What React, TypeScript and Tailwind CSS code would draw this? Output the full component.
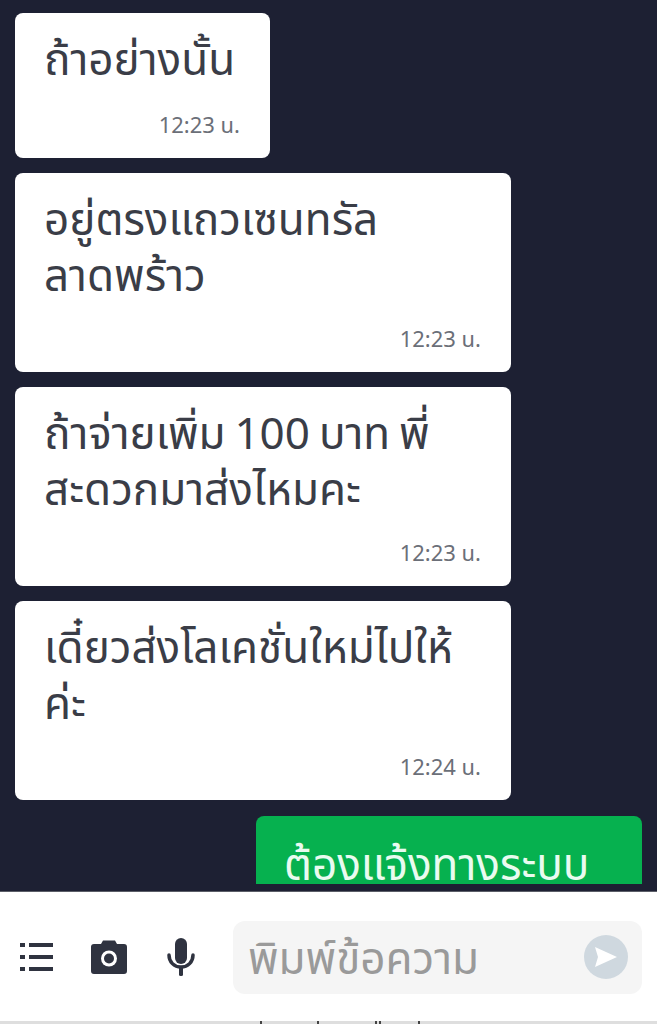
const font = { fontFamily: '"Noto Sans", "Noto Sans Thai", "Noto Sans CJK SC", sans-serif' };

const messages = [
    { lines: ['ถ้าอย่างนั้น'], time: '12:23 น.', small: true },
    { lines: ['อยู่ตรงแถวเซนทรัล', 'ลาดพร้าว'], time: '12:23 น.' },
    { lines: ['ถ้าจ่ายเพิ่ม 100 บาท พี่', 'สะดวกมาส่งไหมคะ'], time: '12:23 น.' },
    { lines: ['เดี๋ยวส่งโลเคชั่นใหม่ไปให้', 'ค่ะ'], time: '12:24 น.' },
];

function Bubble({ lines, time, small }: { lines: string[]; time: string; small?: boolean }) {
    return (
        <div className={`bg-white rounded-[8px] flex flex-col justify-between pl-[29px] pr-[30px] pt-[17px] pb-[19px] ${small ? 'w-[255px] h-[145px]' : 'w-[496px] h-[199px]'}`}>
            <div className="text-[44px] leading-[56px] text-[#3a3d47] whitespace-nowrap [word-spacing:-2.5px]">
                {lines.map((l) => (
                    <div key={l}>{l}</div>
                ))}
            </div>
            <div className="text-right text-[22px] leading-[30px] text-[#6b6f78]">{time}</div>
        </div>
    );
}

export default function App() {
    return (
        <div className="w-[657px] h-[1024px] overflow-hidden flex flex-col bg-white" style={font}>
            {/* Messages */}
            <div className="h-[892px] shrink-0 bg-[#1d2033] overflow-hidden border-b border-[#5b5e68]">
                <div className="flex flex-col gap-[15px] pt-[13px] pl-[15px]">
                    {messages.map((m) => (
                        <Bubble key={m.time + m.lines[0]} {...m} />
                    ))}
                    <div className="ml-[241px] mt-[1px] w-[386px] h-[68px] bg-[#06b14f] rounded-t-[8px] pl-[28px] pt-[19px] overflow-hidden">
                        <div className="text-[44px] leading-[57px] text-[#e9fbf0] whitespace-nowrap">ต้องแจ้งทางระบบ</div>
                    </div>
                </div>
            </div>

            {/* Input bar */}
            <div className="h-[129px] shrink-0 flex items-center pl-[20px] pr-[15px] pt-[1px]">
                <svg width="33" height="30" viewBox="0 0 33 30" className="shrink-0 text-[#2f3340]" fill="currentColor">
                    <rect x="0" y="1" width="5" height="4" />
                    <rect x="9" y="1" width="24" height="4" />
                    <rect x="0" y="13" width="5" height="4" />
                    <rect x="9" y="13" width="24" height="4" />
                    <rect x="0" y="25" width="5" height="4" />
                    <rect x="9" y="25" width="24" height="4" />
                </svg>
                <svg width="38" height="34" viewBox="0 0 38 34" className="shrink-0 ml-[37px]">
                    <path d="M4 4h7l2-3.500h12l2 3.500h7a3 3 0 0 1 3 3v24a3 3 0 0 1-3 3H4a3 3 0 0 1-3-3V7a3 3 0 0 1 3-3z" fill="#2f3340" />
                    <circle cx="19" cy="18.500" r="8" fill="#fff" />
                    <circle cx="19" cy="18.500" r="5" fill="#2f3340" />
                </svg>
                <svg width="28" height="38" viewBox="0 0 28 38" className="shrink-0 ml-[39px]" fill="#2f3340">
                    <rect x="8" y="0" width="12" height="26" rx="6" />
                    <path d="M2 17c0 7 5 12 12 12s12-5 12-12" fill="none" stroke="#2f3340" strokeWidth="3.500" strokeLinecap="round" />
                    <rect x="12" y="28" width="4" height="10" rx="1.500" />
                </svg>
                <div className="ml-[38px] flex-1 h-[73px] bg-[#f5f5f5] rounded-[12px] flex items-center justify-between pl-[15px] pr-[14px]">
                    <span className="text-[44px] text-[#9a9a9a] whitespace-nowrap">พิมพ์ข้อความ</span>
                    <div className="w-[44px] h-[44px] rounded-full bg-[#cfd8df] flex items-center justify-center">
                        <svg width="24" height="22" viewBox="0 0 24 22" fill="#fff">
                            <path d="M1 1l22 10L1 21l3-10z" />
                        </svg>
                    </div>
                </div>
            </div>

            {/* Next screen peeking in: only the tips of its text show */}
            <div className="h-[3px] shrink-0 bg-[#dedede] flex pl-[260px]">
                <span className="w-[2px] bg-[#444]" />
                <span className="w-[2px] bg-[#444] ml-[55px]" />
                <span className="w-[2px] bg-[#444] ml-[56px]" />
                <span className="w-[2px] bg-[#444] ml-[2px]" />
                <span className="w-[2px] bg-[#444] ml-[37px]" />
            </div>
        </div>
    );
}
